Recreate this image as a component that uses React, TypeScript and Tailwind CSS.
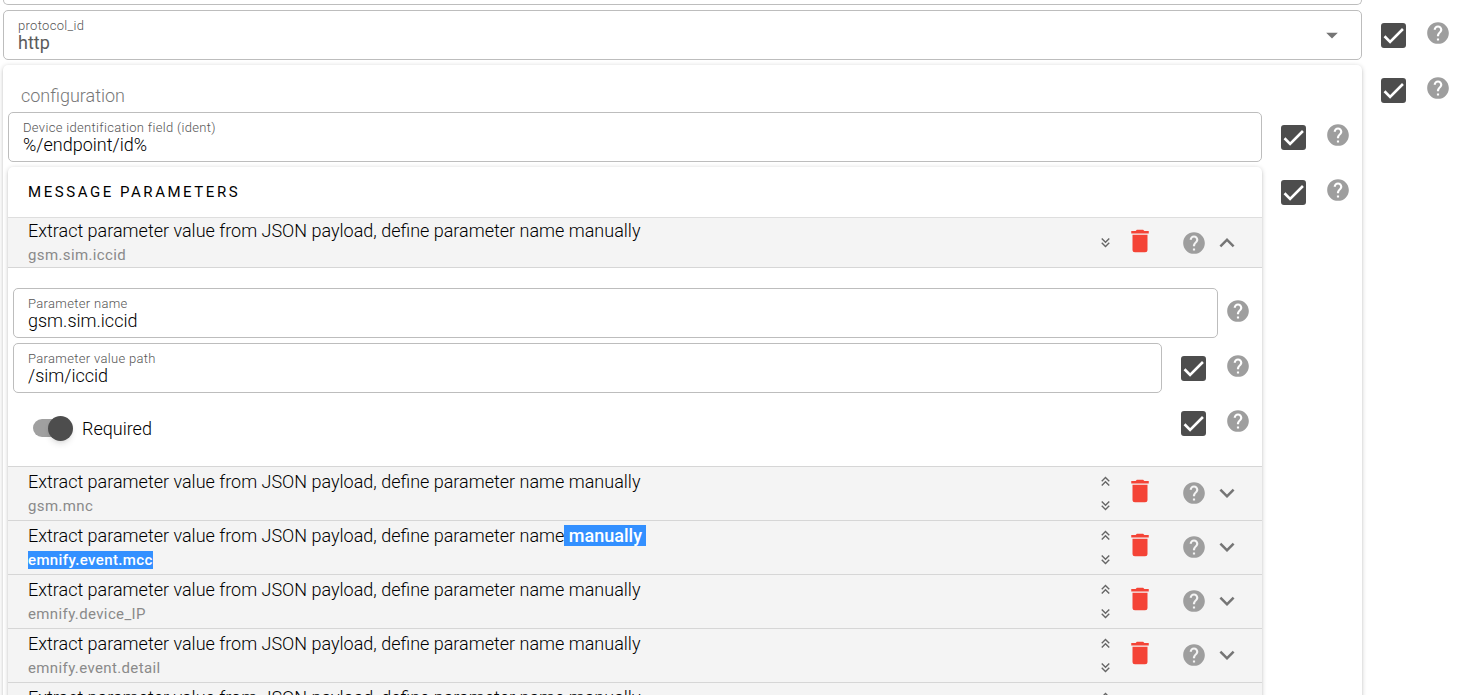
import { useId, useState, type ReactNode } from "react";

const paths = {
  help: "M15.07,11.25L14.17,12.17C13.45,12.89 13,13.5 13,15H11V14.5C11,13.39 11.45,12.39 12.17,11.67L13.41,10.41C13.78,10.05 14,9.55 14,9C14,7.89 13.1,7 12,7A2,2 0 0,0 10,9H8A4,4 0 0,1 12,5A4,4 0 0,1 16,9C16,9.88 15.64,10.67 15.07,11.25M13,19H11V17H13M12,2A10,10 0 0,0 2,12A10,10 0 0,0 12,22A10,10 0 0,0 22,12C22,6.47 17.5,2 12,2Z",
  trash: "M19,4H15.5L14.5,3H9.5L8.5,4H5V6H19M6,19A2,2 0 0,0 8,21H16A2,2 0 0,0 18,19V7H6V19Z",
  down: "M7.41,8.58L12,13.17L16.59,8.58L18,10L12,16L6,10L7.41,8.58Z",
  up: "M7.41,15.41L12,10.83L16.59,15.41L18,14L12,8L6,14L7.41,15.41Z",
  doubleUp: "M7.41,18.41L6,17L12,11L18,17L16.59,18.41L12,13.83L7.41,18.41M7.41,12.41L6,11L12,5L18,11L16.59,12.41L12,7.83L7.41,12.41Z",
  doubleDown: "M16.59,5.59L18,7L12,13L6,7L7.41,5.59L12,10.17L16.59,5.59M16.59,11.59L18,13L12,19L6,13L7.41,11.59L12,16.17L16.59,11.59Z",
  caret: "M7,10L12,15L17,10H7Z",
};

function Icon({ name, className }: { name: keyof typeof paths; className: string }) {
  return (
    <svg viewBox="0 0 24 24" className={className} fill="currentColor" aria-hidden="true">
      <path d={paths[name]} />
    </svg>
  );
}

function HelpButton() {
  return (
    <button type="button" aria-label="Help" className="block size-[26px] shrink-0 text-[#9e9e9e]">
      <Icon name="help" className="size-[26px]" />
    </button>
  );
}

function Check({ label }: { label: string }) {
  return (
    <span className="grid size-[25px] shrink-0 rounded-[3px]">
      <input
        type="checkbox"
        defaultChecked
        aria-label={label}
        className="peer col-start-1 row-start-1 size-full appearance-none rounded-[3px] border-2 border-[#4d4d4d] checked:bg-[#4d4d4d]"
      />
      <svg
        viewBox="0 0 24 24"
        className="pointer-events-none invisible col-start-1 row-start-1 size-[21px] place-self-center peer-checked:visible"
        fill="none"
        stroke="#fff"
        strokeWidth="3"
        aria-hidden="true"
      >
        <path d="M1.73,12.91 8.1,19.28 22.79,4.59" />
      </svg>
    </span>
  );
}

function Row({ check, children }: { check?: string; children: ReactNode }) {
  return (
    <div className="flex items-start">
      <div className="min-w-0 flex-1">{children}</div>
      {check && (
        <div className="pt-[13px] pr-3 pl-[19px]">
          <Check label={check} />
        </div>
      )}
      <div className="pt-2.5 pr-[11px] pl-[7px]">
        <HelpButton />
      </div>
    </div>
  );
}

const labelText = "text-[13px] leading-[14px] font-light tracking-wide text-[#555]";

function Field({ label, value }: { label: string; value: string }) {
  const id = useId();
  return (
    <div className="flex h-[50px] flex-col rounded-[5px] border border-[#bdbdbd] px-3.5 pt-2">
      <label htmlFor={id} className={labelText}>
        {label}
      </label>
      <input id={id} defaultValue={value} className="w-full text-[18px] leading-5 font-light text-black outline-none" />
    </div>
  );
}

function ProtocolSelect() {
  return (
    <div className="flex h-[50px] rounded-[5px] border border-[#bdbdbd] pr-[15px] pl-3.5">
      <div className="flex flex-1 flex-col pt-2">
        <label htmlFor="protocol" className={labelText}>
          protocol_id
        </label>
        <select id="protocol" className="w-full appearance-none text-[18px] leading-5 text-[#5c5c5c] outline-none">
          <option>http</option>
        </select>
      </div>
      <Icon name="caret" className="size-7 self-center text-[#757575]" />
    </div>
  );
}

interface ParamProps {
  name: string;
  first?: boolean;
  open?: boolean;
  marked?: boolean;
  onToggle: () => void;
}

function ParamHeader({ name, first, open, marked, onToggle }: ParamProps) {
  const mark = "bg-[#3390ff] font-medium text-white";
  return (
    <div
      className={`flex items-center border-b border-[#d6d6d6] bg-[#f4f4f4] pr-5 pl-5 ${first ? "h-[50px]" : "h-[54px]"}`}
    >
      <div className="min-w-0 flex-1">
        <div className="text-[18px] leading-6 font-light whitespace-pre text-black">
          Extract parameter value from JSON payload, define parameter name
          {marked ? <mark className={mark}>{" manually "}</mark> : " manually"}
        </div>
        <div className="text-[15px] leading-6 tracking-wide text-[#8a8a8a]">
          {marked ? <mark className={mark}>{name}</mark> : name}
        </div>
      </div>
      <div className="flex w-[17px] flex-col gap-[7px] text-[#666]">
        {!first && (
          <button type="button" aria-label="Move up">
            <Icon name="doubleUp" className="size-[17px]" />
          </button>
        )}
        <button type="button" aria-label="Move down">
          <Icon name="doubleDown" className="size-[17px]" />
        </button>
      </div>
      <div className={`flex items-center ${first ? "" : "pb-0.5"}`}>
        <button type="button" aria-label="Delete" className="mr-[26px] mb-1 ml-[11px] text-[#f44336]">
          <Icon name="trash" className="size-[30px]" />
        </button>
        <HelpButton />
        <button type="button" aria-label="Toggle details" aria-expanded={!!open} onClick={onToggle} className="ml-[5px] text-[#757575]">
          <Icon name={open ? "up" : "down"} className="size-[30px]" />
        </button>
      </div>
    </div>
  );
}

function ParamBody() {
  return (
    <div className="flex flex-col gap-[5px] border-b border-[#d6d6d6] pt-5 pb-[18px] pl-[5px]">
      <Row>
        <Field label="Parameter name" value="gsm.sim.iccid" />
      </Row>
      <Row check="Use parameter value path">
        <Field label="Parameter value path" value="/sim/iccid" />
      </Row>
      <Row check="Use required">
        <label className="flex h-[50px] items-center gap-[9px] pt-2.5 pl-5 text-[18px] font-light text-black">
          <input
            type="checkbox"
            role="switch"
            defaultChecked
            className="flex h-[18px] w-10 appearance-none items-center rounded-full bg-[#a0a0a0] bg-clip-content pr-1 before:size-[25px] before:shrink-0 before:rounded-full before:bg-[#4d4d4d] before:shadow-md checked:before:ml-[15px]"
          />
          Required
        </label>
      </Row>
    </div>
  );
}

const names = ["gsm.sim.iccid", "gsm.mnc", "emnify.event.mcc", "emnify.device_IP", "emnify.event.detail", "emnify.event.id"];
const cardShadow = "rounded-[5px] bg-white shadow-[0_1px_5px_rgba(0,0,0,0.2),0_2px_2px_rgba(0,0,0,0.1),0_3px_1px_-2px_rgba(0,0,0,0.1)]";

export default function App() {
  const [openName, setOpenName] = useState("gsm.sim.iccid");
  return (
    <main className="flex h-screen flex-col gap-[5px] overflow-hidden bg-white pr-0.5 pl-[3px] font-['Roboto',sans-serif]">
      <div className="mr-[100px] h-[5px] shrink-0 rounded-b-[5px] border border-t-0 border-[#bdbdbd]" />
      <Row check="Use protocol_id">
        <ProtocolSelect />
      </Row>
      <Row check="Use configuration">
        <section className={`pl-[5px] ${cardShadow}`}>
          <h2 className="h-[47px] pt-[19px] pl-[13px] text-[18px] leading-6 font-light text-[#777]">configuration</h2>
          <div className="flex flex-col gap-[5px]">
            <Row check="Use ident">
              <Field label="Device identification field (ident)" value="%/endpoint/id%" />
            </Row>
            <Row check="Use message parameters">
              <section className={cardShadow}>
                <h3 className="flex h-[51px] items-center border-b border-[#dedede] pl-5 text-[15px] tracking-[0.17em] text-black uppercase">
                  Message parameters
                </h3>
                {names.map((name, i) => (
                  <div key={name}>
                    <ParamHeader
                      name={name}
                      first={i === 0}
                      open={openName === name}
                      marked={i === 2}
                      onToggle={() => setOpenName(openName === name ? "" : name)}
                    />
                    {openName === name && <ParamBody />}
                  </div>
                ))}
              </section>
            </Row>
          </div>
        </section>
      </Row>
    </main>
  );
}
